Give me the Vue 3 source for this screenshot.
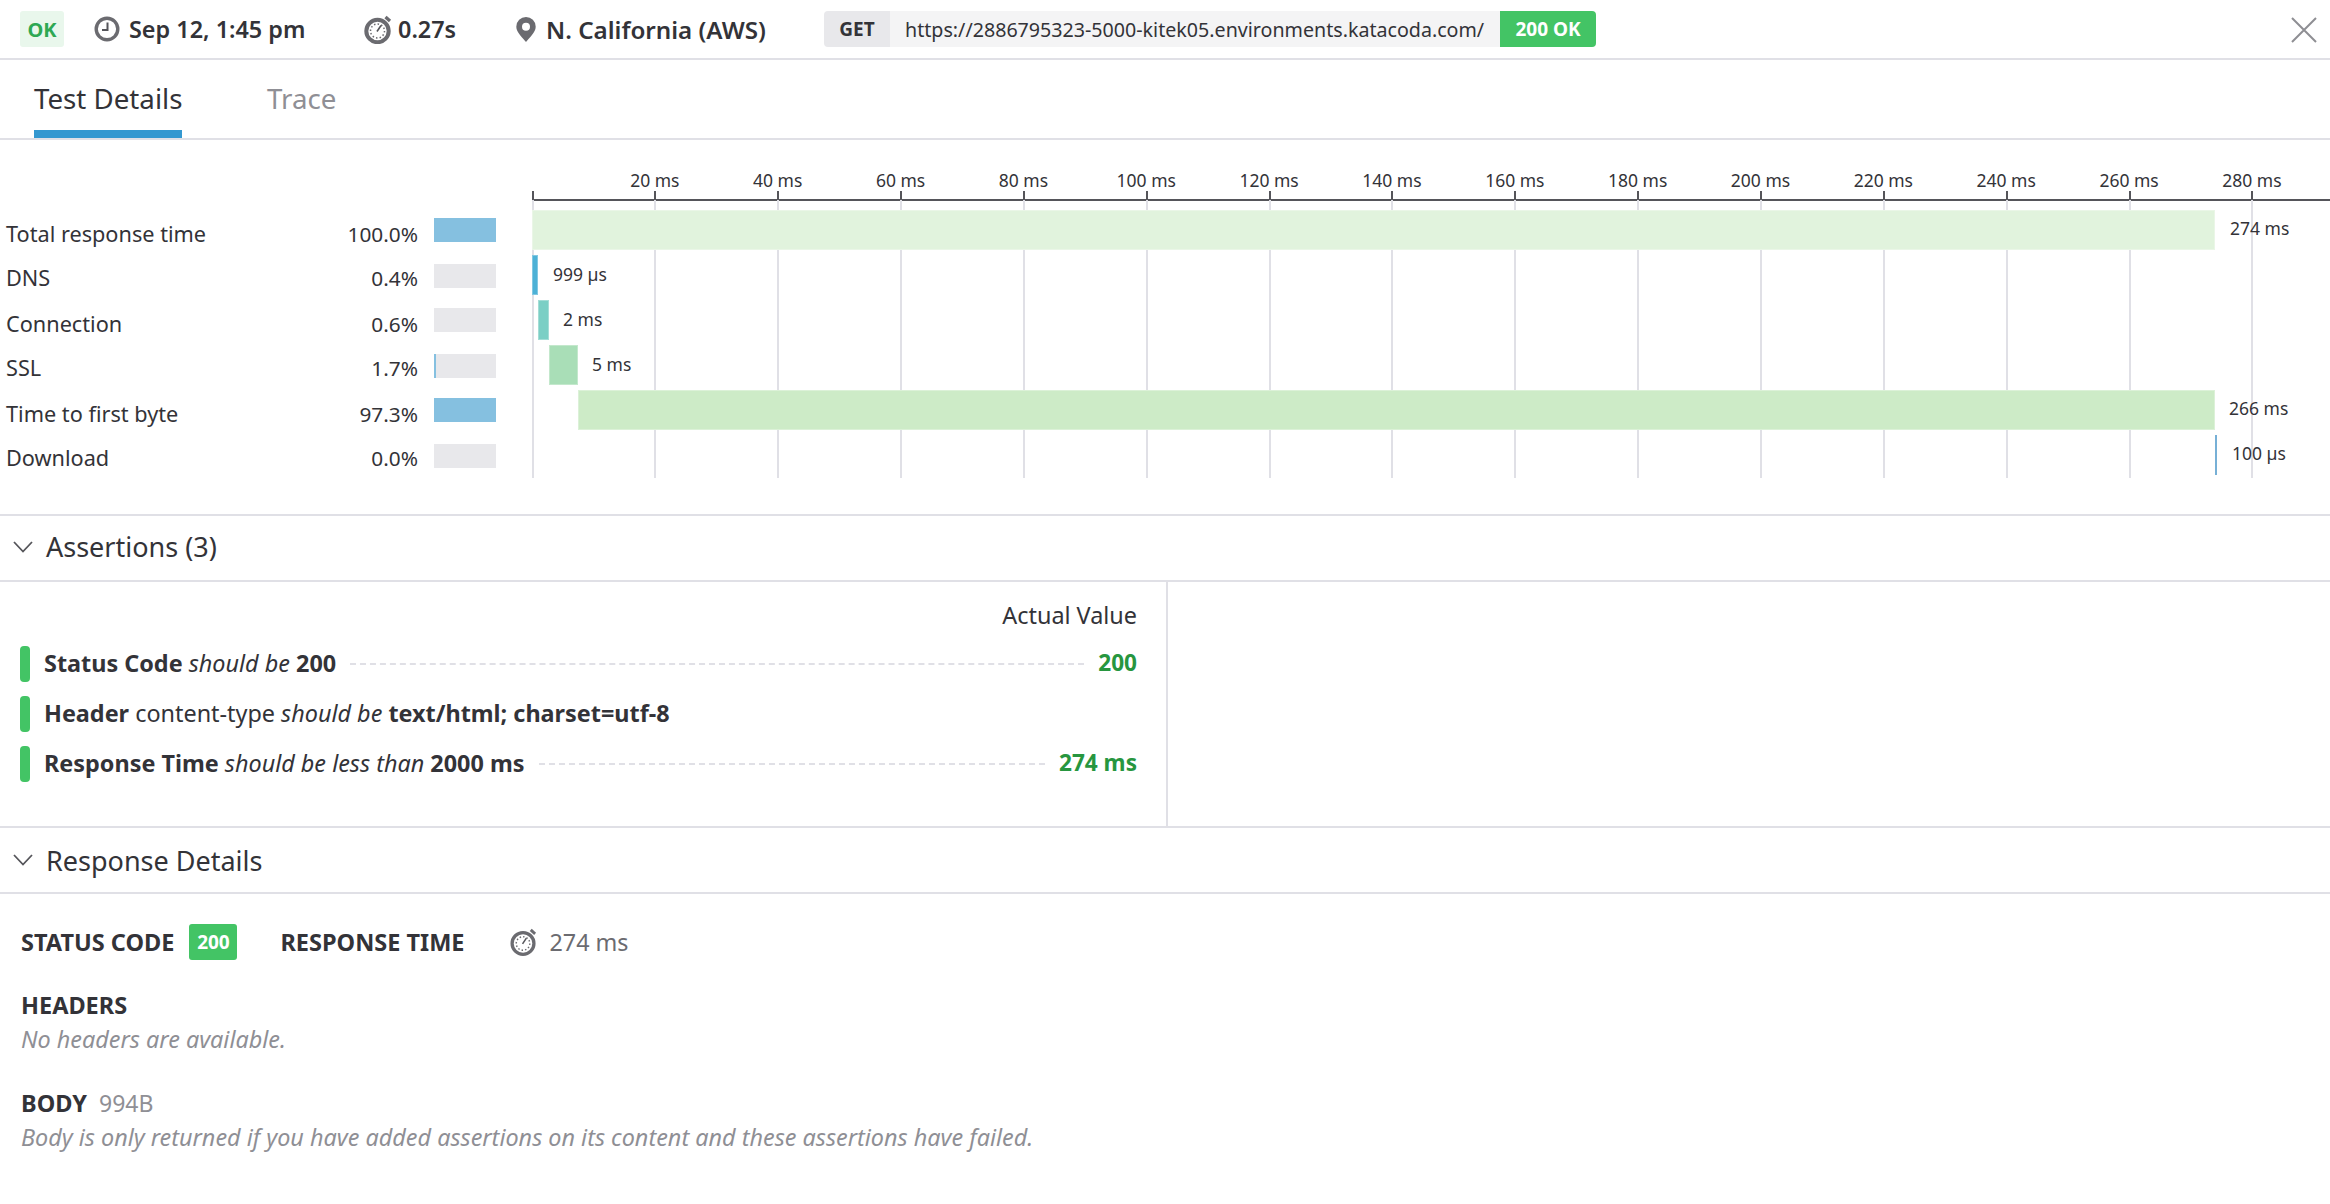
<script setup>
const rows = [
  { label: 'Total response time', pct: '100.0%', fill: 100 },
  { label: 'DNS', pct: '0.4%', fill: 0 },
  { label: 'Connection', pct: '0.6%', fill: 0 },
  { label: 'SSL', pct: '1.7%', fill: 2 },
  { label: 'Time to first byte', pct: '97.3%', fill: 100 },
  { label: 'Download', pct: '0.0%', fill: 0 }
]
const ticks = Array.from({ length: 14 }, (_, i) => ({ ms: (i + 1) * 20, x: (i + 1) * 122.85 }))
const bars = [
  { left: -1, width: 1683, top: 70, color: '#e1f3dd', text: '274 ms', tx: 1697, ty: 76 },
  { left: -1, width: 6, top: 115, color: '#4db1d6', text: '999 µs', tx: 20, ty: 122 },
  { left: 5, width: 11, top: 160, color: '#7bcfc5', text: '2 ms', tx: 30, ty: 167 },
  { left: 16, width: 29, top: 205, color: '#a9deb7', text: '5 ms', tx: 59, ty: 212 },
  { left: 45, width: 1637, top: 250, color: '#cdebc7', text: '266 ms', tx: 1696, ty: 256 },
  { left: 1682, width: 2, top: 295, color: '#3d8fc4', text: '100 µs', tx: 1699, ty: 301 }
]
</script>

<template>
  <div class="page">
    <header class="topbar">
      <span class="ok">OK</span>
      <svg class="ic clock" width="26" height="26" viewBox="0 0 26 26"><circle cx="13" cy="13" r="10.800" fill="none" stroke="#6b6b70" stroke-width="3.400"/><path d="M13.500 6.500v7.500H8" fill="none" stroke="#55555a" stroke-width="2"/></svg>
      <span class="meta date">Sep 12, 1:45 pm</span>
      <svg class="ic watch" width="30" height="29" viewBox="0 0 30 29"><path d="M22.500 2l4.500 4" stroke="#6b6b70" stroke-width="3.200"/><circle cx="14.500" cy="16" r="11.200" fill="none" stroke="#6b6b70" stroke-width="4"/><circle cx="14.500" cy="16" r="7" fill="none" stroke="#6b6b70" stroke-width="1.500" stroke-dasharray="1.500 2.150"/><path d="M14 16.500l4-6" stroke="#55555a" stroke-width="1.600"/></svg>
      <span class="meta time">0.27s</span>
      <svg class="ic pin" width="20" height="25" viewBox="0 0 20 25"><path fill-rule="evenodd" d="M10 0a9.700 9.700 0 0 1 9.700 9.700C19.700 15.500 13 21 10 25 7 21 .3 15.500 .3 9.700A9.700 9.700 0 0 1 10 0zm0 5.700a4 4 0 1 0 0 8 4 4 0 0 0 0-8z" fill="#6b6b70"/></svg>
      <span class="meta loc">N. California (AWS)</span>
      <div class="req">
        <span class="get">GET</span>
        <span class="url">https://2886795323-5000-kitek05.environments.katacoda.com/</span>
        <span class="status">200 OK</span>
      </div>
      <svg class="close" width="26" height="26" viewBox="0 0 26 26"><path d="M1 1l24 24M25 1L1 25" stroke="#8e8e93" stroke-width="2"/></svg>
    </header>

    <nav class="tabs">
      <span class="tab active">Test Details</span>
      <span class="tab">Trace</span>
    </nav>

    <section class="timings">
      <div class="table">
        <div v-for="r in rows" :key="r.label" class="row">
          <span class="label">{{ r.label }}</span>
          <span class="pct">{{ r.pct }}</span>
          <span class="mini"><i :style="{ width: r.fill + '%' }"></i></span>
        </div>
      </div>
      <div class="chart">
        <div class="axis"></div>
        <div class="gridline zero"></div>
        <template v-for="t in ticks" :key="t.ms">
          <div class="gridline" :style="{ left: t.x + 'px' }"></div>
          <div class="tick" :style="{ left: t.x + 'px' }"></div>
          <span class="ticklabel" :style="{ left: t.x + 'px' }">{{ t.ms }} ms</span>
        </template>
        <template v-for="b in bars" :key="b.text">
          <div class="bar" :style="{ left: b.left + 'px', width: b.width + 'px', top: b.top + 'px', background: b.color }"></div>
          <span class="barlabel" :style="{ left: b.tx + 'px', top: b.ty + 'px' }">{{ b.text }}</span>
        </template>
      </div>
    </section>

    <h2 class="sec first">
      <svg width="20" height="12" viewBox="0 0 20 12"><path d="M1 1l9 9.500L19 1" fill="none" stroke="#55555a" stroke-width="1.800"/></svg>
      Assertions (3)
    </h2>

    <section class="assertions">
      <div class="a-left">
        <div class="a-head">Actual Value</div>
        <div class="a-row">
          <i class="pill"></i>
          <span class="a-text"><b>Status Code</b> <em>should be</em> <b>200</b></span>
          <span class="dash"></span>
          <b class="val">200</b>
        </div>
        <div class="a-row">
          <i class="pill"></i>
          <span class="a-text"><b>Header</b> content-type <em>should be</em> <b>text/html; charset=utf-8</b></span>
        </div>
        <div class="a-row">
          <i class="pill"></i>
          <span class="a-text"><b>Response Time</b> <em>should be less than</em> <b>2000 ms</b></span>
          <span class="dash"></span>
          <b class="val">274 ms</b>
        </div>
      </div>
    </section>

    <h2 class="sec">
      <svg width="20" height="12" viewBox="0 0 20 12"><path d="M1 1l9 9.500L19 1" fill="none" stroke="#55555a" stroke-width="1.800"/></svg>
      Response Details
    </h2>

    <section class="details">
      <div class="d-top">
        <b class="caps">STATUS CODE</b>
        <span class="code">200</span>
        <b class="caps rt">RESPONSE TIME</b>
        <svg width="29" height="28" viewBox="0 0 30 29"><path d="M22.500 2l4.500 4" stroke="#6b6b70" stroke-width="3"/><circle cx="14.500" cy="16" r="11.300" fill="none" stroke="#6b6b70" stroke-width="3.400"/><circle cx="14.500" cy="16" r="7" fill="none" stroke="#6b6b70" stroke-width="1.500" stroke-dasharray="1.500 2.150"/><path d="M14 16.500l4-6" stroke="#55555a" stroke-width="1.600"/></svg>
        <span class="ms">274 ms</span>
      </div>
      <div class="caps hd">HEADERS</div>
      <div class="note">No headers are available.</div>
      <div class="caps bd">BODY <span class="size">994B</span></div>
      <div class="note">Body is only returned if you have added assertions on its content and these assertions have failed.</div>
    </section>
  </div>
</template>

<style>
html, body { margin: 0; background: #fff; }
</style>

<style scoped>
.page { width: 2330px; height: 1204px; overflow: hidden; font-family: "Noto Sans", "Open Sans", sans-serif; color: #333338; background: #fff; position: relative; }
.topbar { height: 58px; border-bottom: 2px solid #e0e0e6; display: flex; align-items: center; padding-left: 20px; box-sizing: content-box; }
.ok { width: 44px; height: 36px; background: #e9f7ec; color: #2ea853; font-weight: 700; font-size: 20px; display: flex; align-items: center; justify-content: center; border-radius: 3px; }
.ic { flex: none; }
.clock { margin-left: 30px; }
.meta { font-weight: 600; font-size: 23.400px; color: #333338; white-space: nowrap; }
.date { margin-left: 9px; width: 234px; }
.time { margin-left: 5px; width: 118px; }
.loc { margin-left: 10px; width: 278px; font-size: 24.200px; }
.req { display: flex; height: 36px; border-radius: 4px; overflow: hidden; width: 772px; }
.get { width: 66px; background: #e8e8eb; font-weight: 700; font-size: 19px; display: flex; align-items: center; justify-content: center; }
.url { width: 610px; background: #f4f4f5; font-size: 19.650px; display: flex; align-items: center; padding-left: 15px; box-sizing: border-box; white-space: nowrap; }
.status { width: 96px; background: #43c465; color: #fff; font-weight: 700; font-size: 19px; display: flex; align-items: center; justify-content: center; }
.close { position: absolute; left: 2291px; top: 17px; }

.tabs { height: 78px; border-bottom: 2px solid #e0e0e6; display: flex; padding-left: 34px; gap: 85px; }
.tab { font-size: 27.700px; height: 70px; line-height: 76px; color: #8f8f95; white-space: nowrap; }
.tab.active { color: #333338; width: 148px; height: 70px; border-bottom: 8px solid #3498d0; text-align: center; }

.timings { height: 374px; border-bottom: 2px solid #e0e0e6; display: grid; grid-template-columns: 533px 1fr; }
.table { padding-top: 78px; }
.row { display: grid; grid-template-columns: 201px 211px 62px; column-gap: 0; height: 46px; align-items: start; padding-left: 6px; width: 503px; box-sizing: border-box; }
.row:nth-child(even) { height: 44px; }
.label { font-size: 21.700px; line-height: 24px; margin-top: 4px; white-space: nowrap; }
.row:nth-child(even) .label { margin-top: 2px; }
.pct { font-size: 20.800px; line-height: 24px; margin-top: 4px; text-align: right; }
.row:nth-child(even) .pct { margin-top: 2px; }
.mini { height: 24px; width: 62px; background: #e8e8eb; display: block; margin-left: 16px; }
.mini i { display: block; height: 100%; background: #85c0e0; }
.row:nth-child(4) .mini i { width: 2px !important; }

.chart { position: relative; }
.axis { position: absolute; left: 0; right: 0; top: 59px; height: 2px; background: #55555a; }
.gridline { position: absolute; top: 60px; height: 278px; width: 2px; margin-left: -1.500px; background: #e0e0e6; }
.gridline.zero { left: 0; }
.tick { position: absolute; top: 51px; height: 9px; width: 2px; margin-left: -1.500px; background: #55555a; }
.gridline.zero::before { content: ""; position: absolute; top: -9px; left: 0; width: 2px; height: 9px; background: #55555a; }
.ticklabel { position: absolute; top: 28px; transform: translateX(-50%); font-size: 17.500px; line-height: 24px; white-space: nowrap; margin-left: -1px; }
.bar { position: absolute; height: 40px; box-shadow: inset 0 0 0 1px rgba(255,255,255,.3); }
.barlabel { position: absolute; font-size: 17.500px; line-height: 24px; white-space: nowrap; }

.sec { margin: 0; height: 64px; border-bottom: 2px solid #e0e0e6; display: flex; align-items: center; gap: 13px; padding-left: 13px; font-weight: 400; font-size: 27px; color: #333338; }
.sec.first { height: 61px; padding-bottom: 3px; }

.assertions { height: 244px; border-bottom: 2px solid #e0e0e6; }
.a-left { height: 244px; border-right: 2px solid #e0e0e6; padding: 17px 29px 0 20px; box-sizing: border-box; width: 1168px; }
.a-head { text-align: right; font-size: 23.400px; line-height: 32px; height: 47px; }
.a-row { display: flex; align-items: center; height: 36px; margin-bottom: 14px; font-size: 23.400px; line-height: 32px; white-space: nowrap; }
.a-text { position: relative; top: -1px; }
.val { position: relative; top: -1px; font-size: 22.600px; }
.pill { width: 10px; height: 36px; border-radius: 4px; background: #43c465; flex: none; margin-right: 14px; }
.a-text b, .val { font-weight: 700; }
.dash { flex: 1; border-top: 2px dashed #e0e0e6; margin: 0 14px; }
.val { color: #27963f; }

.details { padding: 30px 0 0 21px; }
.d-top { display: flex; align-items: center; height: 36px; }
.caps { font-weight: 700; font-size: 23.500px; color: #333338; }
.code { width: 48px; height: 36px; margin-left: 15px; background: #43c465; color: #fff; border-radius: 3px; font-weight: 700; font-size: 19px; display: flex; align-items: center; justify-content: center; }
.rt { margin-left: 43px; margin-right: 44px; }
.ms { margin-left: 12px; font-size: 23.300px; color: #6b6b70; }
.hd { margin-top: 29px; line-height: 32px; }
.bd { margin-top: 32px; line-height: 32px; }
.size { font-weight: 400; color: #8f8f95; font-size: 23px; margin-left: 6px; }
.note { margin-top: 2px; font-style: italic; font-size: 23.400px; line-height: 32px; color: #8f8f95; white-space: nowrap; }
</style>
